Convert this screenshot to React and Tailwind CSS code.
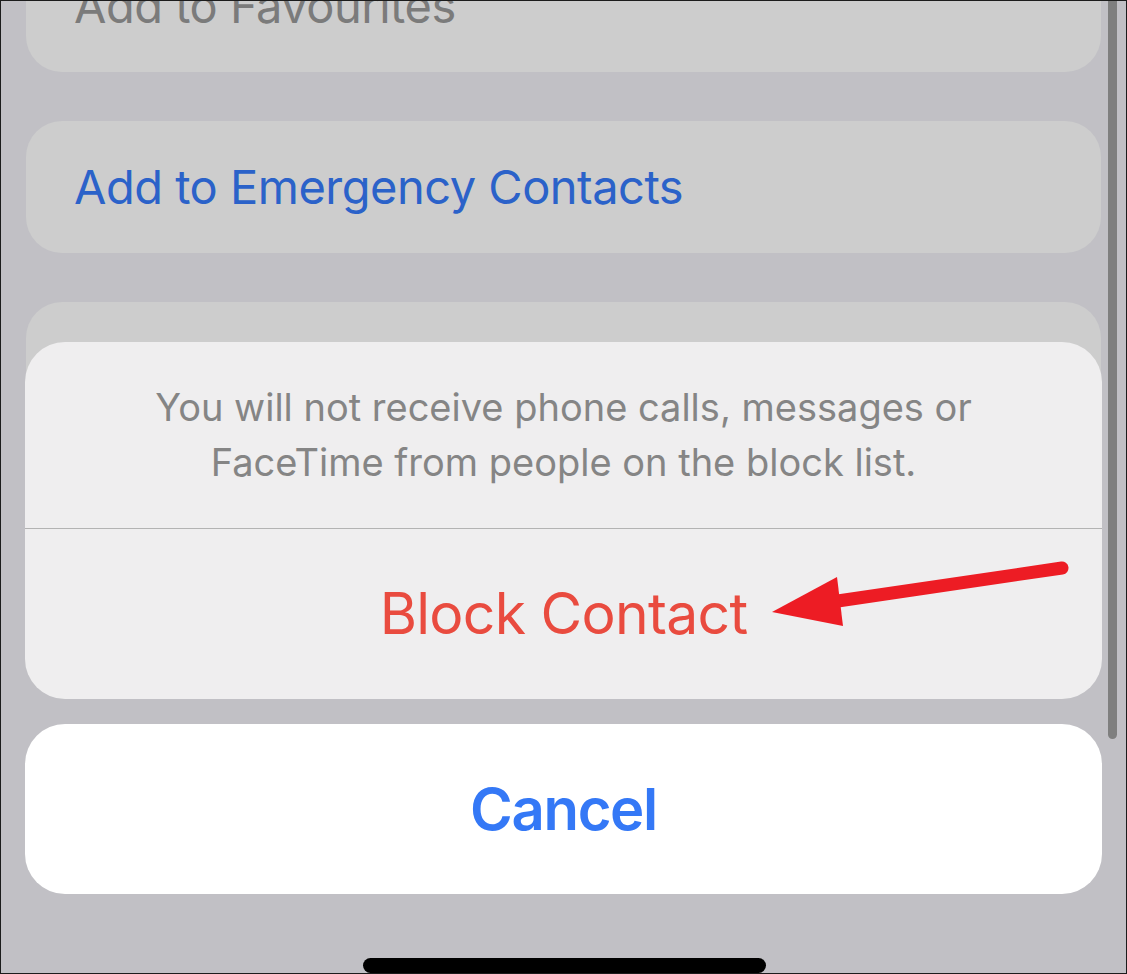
const font = { fontFamily: 'Inter, "Noto Sans", sans-serif' };

function Card({ children, className = '' }) {
  return (
    <div className={`mx-[25px] h-[132px] rounded-[36px] bg-[#cdcdcd] flex items-center px-[48px] ${className}`}>
      {children}
    </div>
  );
}

function Arrow() {
  return (
    <svg className="absolute left-0 top-0 pointer-events-none" width="1127" height="974" viewBox="0 0 1127 974">
      <line x1="1061" y1="567" x2="830" y2="601" stroke="#ed1c24" strokeWidth="13" strokeLinecap="round" />
      <polygon points="771,611 836,576 842,625" fill="#ed1c24" />
    </svg>
  );
}

export default function App() {
  return (
    <div style={font} className="relative w-[1127px] h-[974px] overflow-hidden bg-[#c1c0c5] border border-[#1c1c1c]">
      {/* background list */}
      <div className="flex flex-col gap-[49px] -mt-[61px]">
        <Card>
          <span className="text-[47px] text-[#7b7b7b] tracking-[-0.5px]">Add to Favourites</span>
        </Card>
        <Card>
          <span className="text-[47px] text-[#2b62c9] tracking-[-0.5px]">Add to Emergency Contacts</span>
        </Card>
        <Card />
      </div>

      {/* scrollbar */}
      <div className="absolute left-[1107px] top-0 w-[9px] h-[738px] rounded-b-full bg-[#7f7f7f]" />

      {/* action sheet */}
      <div className="absolute left-[24px] right-[24px] top-[341px] flex flex-col gap-[25px]">
        <div className="rounded-[40px] bg-[#efeeef] overflow-hidden">
          <div className="h-[186px] flex items-center justify-center text-center text-[38px] leading-[55px] text-[#858585] px-8">
            <p>
              You will not receive phone calls, messages or
              <br />
              FaceTime from people on the block list.
            </p>
          </div>
          <div className="h-px bg-[#b3b3b3]" />
          <div className="h-[170px] flex items-center justify-center text-[57px] tracking-[-0.7px] text-[#e94b3f]">
            Block Contact
          </div>
        </div>
        <div className="h-[170px] rounded-[40px] bg-white flex items-center justify-center text-[58px] tracking-[-1.3px] font-semibold text-[#3478f6]">
          Cancel
        </div>
      </div>

      {/* home indicator */}
      <div className="absolute left-[362px] top-[957px] w-[403px] h-[15px] rounded-full bg-black" />

      <Arrow />
    </div>
  );
}
